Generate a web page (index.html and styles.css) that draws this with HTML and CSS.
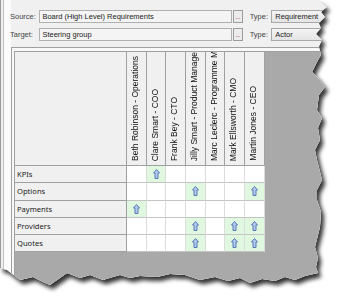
FILE: index.html
```html
<!DOCTYPE html>
<html lang="en">
<head>
    <meta charset="UTF-8">
    <meta name="viewport" content="width=device-width, initial-scale=1.0">
    <title>Relationship matrix</title>
    <link rel="stylesheet" href="styles.css">
</head>
<body>

<svg class="defs" width="0" height="0">
    <symbol id="arrow" viewBox="0 0 7 10">
        <path d="M3.5 0.5 L6.5 4 H5 V9.5 H2 V4 H0.5 Z" fill="#b3cbee" stroke="#5878b8" stroke-width="1" stroke-linejoin="round"/>
    </symbol>
</svg>

<div class="torn">
    <div class="screen">
        <div class="form">
            <div class="form-row">
                <span class="label">Source:</span>
                <div class="field">Board (High Level) Requirements</div>
                <button class="dots">...</button>
                <span class="label type-label">Type:</span>
                <div class="combo">Requirement</div>
            </div>
            <div class="form-row">
                <span class="label">Target:</span>
                <div class="field">Steering group</div>
                <button class="dots">...</button>
                <span class="label type-label">Type:</span>
                <div class="combo">Actor</div>
            </div>
        </div>

        <div class="grid-frame">
            <div class="grid-view">
                <div class="matrix" id="matrix">
                    <div class="corner"></div>
                    <!-- заголовки колонок и строки добавляются скриптом -->
                </div>
            </div>
        </div>
    </div>
</div>

<script>
    // длинные имена в заголовке обрезаны так же, как в гриде
    const people = [
        'Beth Robinson - Operations',
        'Clare Smart - COO',
        'Frank Bey - CTO',
        'Jilly Smart - Product Manage',
        'Marc Leclerc - Programme M',
        'Mark Ellsworth - CMO',
        'Martin Jones - CEO'
    ];

    // номера колонок, где есть связь
    const rows = [
        { name: 'KPIs', links: [1] },
        { name: 'Options', links: [3, 6] },
        { name: 'Payments', links: [0] },
        { name: 'Providers', links: [3, 5, 6] },
        { name: 'Quotes', links: [3, 5, 6] }
    ];

    const matrix = document.getElementById('matrix');

    people.forEach(person => {
        const head = document.createElement('div');
        head.className = 'col-head';
        head.innerHTML = `<span>${person}</span>`;
        matrix.appendChild(head);
    });

    rows.forEach(row => {
        const head = document.createElement('div');
        head.className = 'row-head';
        head.innerHTML = `<span>${row.name}</span>`;
        matrix.appendChild(head);

        people.forEach((person, i) => {
            const cell = document.createElement('div');
            cell.className = 'cell';
            if (row.links.includes(i)) {
                cell.classList.add('linked');
                cell.innerHTML = '<svg class="arrow" width="7" height="10"><use href="#arrow"/></svg>';
            }
            matrix.appendChild(cell);
        });
    });
</script>

</body>
</html>
```

FILE: styles.css
```css
body {
    margin: 0;
    background-color: #fff;
    font-family: "Liberation Sans", Arial, sans-serif;
    color: #111;
}
.defs {
    position: absolute;
}
.torn {
    width: 340px;
    height: 301px;
    filter: drop-shadow(3px 4px 2px rgba(0, 0, 0, 0.8));
}
.screen {
    box-sizing: border-box;
    width: 340px;
    height: 301px;
    display: flex;
    flex-direction: column;
    padding-left: 9px;
    border-left: 1px solid #9a9a9a;
    background: linear-gradient(to right, transparent 2px, #c2c2c2 2px, #c2c2c2 3px, #fbfbfb 3px, #fbfbfb 10px, transparent 10px), #f0f0f0;
    clip-path: polygon(
        0 0, 318px 0, 322px 3px, 327px 7px, 321px 12px, 325px 17px, 319px 23px, 321px 28px,
        316px 34px, 322px 40px, 319px 47px, 321px 55px, 317px 62px, 312px 72px, 318px 78px,
        325px 87px, 319px 95px, 317px 110px, 322px 118px, 318px 128px, 320px 140px, 315px 150px,
        317px 160px, 322px 180px, 317px 190px, 317px 200px, 321px 212px, 320px 227px, 315px 247px,
        318px 258px, 316px 267px, 318px 273px,
        305px 276px, 295px 280px, 285px 277px, 275px 281px, 262px 279px, 250px 283px, 240px 278px,
        228px 281px, 215px 277px, 200px 280px, 185px 275px, 170px 274px, 157px 277px, 140px 276px,
        130px 278px, 120px 275px, 113px 277px, 103px 280px, 90px 275px, 80px 278px, 67px 273px,
        60px 278px, 50px 285px, 43px 282px, 33px 277px, 20px 280px, 7px 270px, 0 268px
    );
}

/* верхняя форма */
.form {
    display: flex;
    flex-direction: column;
    gap: 5px;
    padding-top: 10px;
    font-size: 7.5px;
}
.form-row {
    display: flex;
    align-items: center;
    height: 13px;
}
.label {
    width: 30px;
    color: #444;
}
.field {
    box-sizing: border-box;
    width: 196px;
    height: 13px;
    padding-left: 2px;
    line-height: 11px;
    border: 1px solid #b0b0b0;
    background-color: #f4f4f4;
    color: #222;
    white-space: nowrap;
}
.dots {
    box-sizing: border-box;
    width: 10px;
    height: 13px;
    margin-left: 1px;
    padding: 0;
    border: 1px solid #9c9c9c;
    background-color: #ececec;
    color: #b86a6a;
    font-family: "Liberation Sans", Arial, sans-serif;
    font-size: 8px;
    line-height: 12px;
    letter-spacing: -0.5px;
    text-align: center;
}
.type-label {
    width: 22px;
    margin-left: 7px;
}
.combo {
    box-sizing: border-box;
    width: 70px;
    height: 13px;
    padding-left: 3px;
    line-height: 11px;
    border: 1px solid #a8a8a8;
    background: linear-gradient(#f4f4f4, #e4e4e4);
    color: #222;
    white-space: nowrap;
}

/* матрица */
.grid-frame {
    flex: 1;
    margin: 6px 0 0 1px;
    padding: 3px 0 0 2px;
    border-top: 1px solid #a0a0a0;
    border-left: 1px solid #a0a0a0;
    background-color: #f8f8f8;
}
.grid-view {
    box-sizing: border-box;
    height: 100%;
    border-top: 1px solid #a0a0a0;
    border-left: 1px solid #a0a0a0;
    background-color: #a9a9a9;
}
.matrix {
    display: grid;
    grid-template-columns: 112px repeat(7, 19.7px);
    grid-template-rows: 114px repeat(5, 17.3px);
    width: max-content;
    background-color: #fff;
}
.corner, .col-head, .row-head {
    box-sizing: border-box;
    border-right: 1px solid #a0a0a0;
    border-bottom: 1px solid #a0a0a0;
    background-color: #f0f0f0;
}
.col-head {
    display: flex;
    align-items: flex-end;
    padding: 0 0 4px 3px;
    overflow: hidden;
}
.col-head span {
    writing-mode: vertical-rl;
    transform: rotate(180deg);
    white-space: nowrap;
    font-size: 8.5px;
    line-height: 10px;
    color: #111;
}
.row-head {
    display: flex;
    align-items: center;
    padding-left: 2px;
}
.row-head span {
    font-family: "Noto Sans", "Liberation Sans", sans-serif;
    font-size: 7.6px;
    color: #1b1b1b;
}
.cell {
    box-sizing: border-box;
    display: flex;
    align-items: center;
    justify-content: center;
    border-right: 1px solid #dcdcdc;
    border-bottom: 1px solid #c4c4c4;
}
.cell:nth-child(8n+1) {
    border-right-color: #a0a0a0;
}
.linked {
    background-color: #e0f8df;
}
```
